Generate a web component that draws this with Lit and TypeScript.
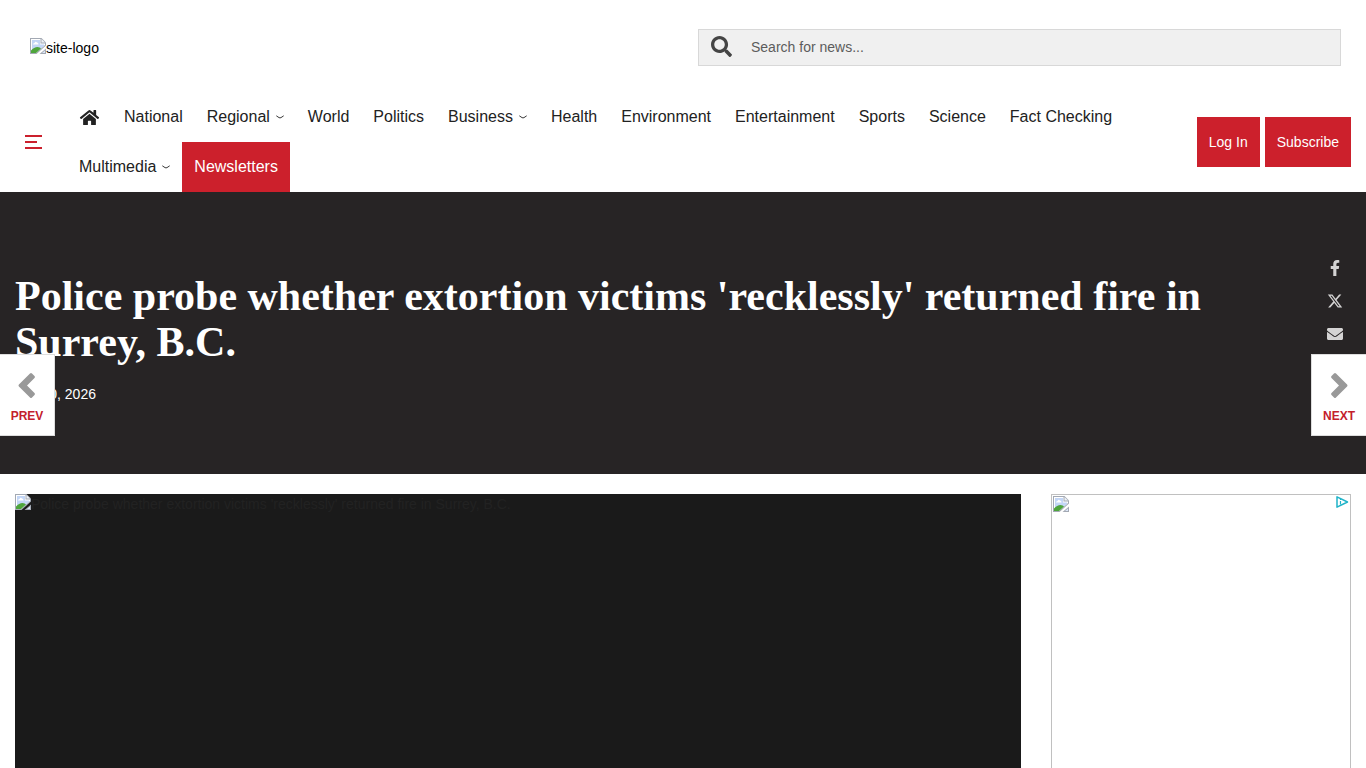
import { LitElement, html, css, svg, nothing } from "lit";
import { customElement, property } from "lit/decorators.js";

interface NavEntry {
  label: string;
  menu?: boolean;
  accent?: boolean;
}

const NAV: NavEntry[] = [
  { label: "National" },
  { label: "Regional", menu: true },
  { label: "World" },
  { label: "Politics" },
  { label: "Business", menu: true },
  { label: "Health" },
  { label: "Environment" },
  { label: "Entertainment" },
  { label: "Sports" },
  { label: "Science" },
  { label: "Fact Checking" },
  { label: "Multimedia", menu: true },
  { label: "Newsletters", accent: true },
];

const HEADLINE =
  "Police probe whether extortion victims 'recklessly' returned fire in Surrey, B.C.";

const ICONS: Record<string, { box: string; path: string }> = {
  home: {
    box: "0 0 576 512",
    path: "M280.37 148.26L96 300.11V464a16 16 0 0 0 16 16l112.06-.29a16 16 0 0 0 15.92-16V368a16 16 0 0 1 16-16h64a16 16 0 0 1 16 16v95.64a16 16 0 0 0 16 16.05L464 480a16 16 0 0 0 16-16V300L295.67 148.26a12.19 12.19 0 0 0-15.3 0zM571.6 251.47L488 182.56V44.05a12 12 0 0 0-12-12h-56a12 12 0 0 0-12 12v72.61L318.47 43a48 48 0 0 0-61 0L4.34 251.47a12 12 0 0 0-1.6 16.9l25.5 31A12 12 0 0 0 45.15 301l235.22-193.74a12.19 12.19 0 0 1 15.3 0L530.9 301a12 12 0 0 0 16.9-1.6l25.5-31a12 12 0 0 0-1.7-16.93z",
  },
  search: {
    box: "0 0 512 512",
    path: "M505 442.7L405.3 343c-4.5-4.500-10.600-7-17-7H372c27.600-35.300 44-79.700 44-128C416 93.100 322.900 0 208 0S0 93.100 0 208s93.100 208 208 208c48.300 0 92.700-16.400 128-44v16.300c0 6.400 2.500 12.500 7 17l99.700 99.700c9.400 9.400 24.600 9.400 33.900 0l28.300-28.300c9.400-9.400 9.400-24.600.1-34zM208 336c-70.700 0-128-57.200-128-128 0-70.700 57.200-128 128-128 70.700 0 128 57.200 128 128 0 70.700-57.200 128-128 128z",
  },
  facebook: {
    box: "0 0 320 512",
    path: "M279.140 288l14.220-92.660h-88.910v-60.130c0-25.350 12.420-50.060 52.240-50.060h40.420V6.260S260.430 0 225.360 0c-73.220 0-121.080 44.380-121.080 124.720v70.620H22.890V288h81.390v224h100.170V288z",
  },
  x: {
    box: "0 0 512 512",
    path: "M389.2 48h70.600L305.600 224.200 487 464H345L233.700 318.600 106.500 464H35.800L200.700 275.500 26.800 48H172.400L272.900 180.900 389.200 48zM364.400 421.800h39.100L151.100 88h-42L364.400 421.800z",
  },
  mail: {
    box: "0 0 512 512",
    path: "M502.3 190.800c3.900-3.100 9.700-.2 9.700 4.700V400c0 26.500-21.500 48-48 48H48c-26.500 0-48-21.500-48-48V195.600c0-5 5.700-7.800 9.700-4.700 22.400 17.400 52.100 39.500 154.100 113.600 21.100 15.400 56.700 47.800 92.200 47.600 35.700.3 72-32.800 92.300-47.600 102-74.100 131.600-96.300 154-113.700zM256 320c23.200.4 56.600-29.200 73.400-41.400 132.700-96.300 142.800-104.700 173.400-128.700 5.800-4.500 9.200-11.500 9.200-18.900v-19c0-26.500-21.500-48-48-48H48c-26.500 0-48 21.500-48 48v19c0 7.400 3.400 14.300 9.200 18.900 30.600 23.900 40.700 32.400 173.400 128.700 16.800 12.200 50.200 41.800 73.400 41.400z",
  },
  left: {
    box: "0 0 20 31",
    path: "M1.900 14.600L13 3.500Q14 2.500 15 3.500L17.500 6Q18.500 7 17.500 8L10 15.500L17.500 23Q18.500 24 17.500 25L15 27.500Q14 28.500 13 27.500L1.900 16.400Q1 15.500 1.900 14.600Z",
  },
  right: {
    box: "0 0 20 31",
    path: "M18.100 14.600L7 3.500Q6 2.500 5 3.500L2.500 6Q1.500 7 2.500 8L10 15.500L2.500 23Q1.500 24 2.500 25L5 27.500Q6 28.500 7 27.500L18.100 16.400Q19 15.500 18.100 14.600Z",
  },
};

const icon = (name: string) => svg`
  <svg class="icon icon-${name}" viewBox=${ICONS[name].box} aria-hidden="true">
    <path fill="currentColor" d=${ICONS[name].path}></path>
  </svg>`;

/** Placeholder shown where a picture is missing, followed by its description. */
@customElement("missing-picture")
export class MissingPicture extends LitElement {
  @property() label = "";

  static styles = css`
    :host {
      display: flex;
      align-items: flex-start;
    }
    .glyph {
      display: block;
      flex: none;
      width: 16px;
      height: 16px;
    }
    .label {
      line-height: 20px;
    }
  `;

  render() {
    return html`
      <svg class="glyph" viewBox="0 0 16 16" aria-hidden="true">
        <path d="M0 0H11.500L16 4.500V7.500L6.500 16H0Z" fill="#a3a9b3"></path>
        <path d="M1 1H10.500V5.500H15V7L6 15H1Z" fill="#fff"></path>
        <path d="M2 2H10V6.500H14V8L6.500 14H2Z" fill="#c3d6f6"></path>
        <path d="M3 6.500q0-1.500 1.500-1.500q1-2 2.500-.5q1.500 0 1.500 2Z" fill="#fff"></path>
        <path d="M1 15V12.500Q4 9 7.500 9Q10 9 11 10.500L6 15Z" fill="#4ea53c"></path>
        <path d="M11.500 1V4.500H15Z" fill="#eef1f6"></path>
        <path d="M16 10.500V16H9.500Z" fill="#a3a9b3"></path>
        <path d="M15 12.500V15H12Z" fill="#dbe6f8"></path>
      </svg>
      ${this.label ? html`<span class="label">${this.label}</span>` : nothing}
    `;
  }
}

@customElement("app-root")
export class AppRoot extends LitElement {
  static styles = css`
    :host {
      display: block;
      background: #fff;
      color: #000;
      font: 14px/20px "Liberation Sans", Arial, sans-serif;
    }
    * {
      box-sizing: border-box;
    }
    a {
      color: inherit;
      text-decoration: none;
    }
    button {
      border: 0;
      margin: 0;
      padding: 0;
      background: none;
      font: inherit;
      color: inherit;
      cursor: pointer;
    }
    .icon {
      display: block;
    }
    .masthead {
      display: grid;
      grid-template-columns: 1fr 1fr;
      align-items: center;
      padding: 29px 0 26px;
    }
    .logo {
      justify-self: start;
      margin-left: 30px;
    }
    .search {
      display: flex;
      align-items: center;
      height: 37px;
      margin: 0 25px 0 15px;
      border: 1px solid #d8d8d8;
      background: #f0f0f0;
      color: #444;
    }
    .search-button {
      padding: 0 19px 2px 12px;
    }
    .icon-search {
      width: 21px;
      height: 21px;
    }
    .search-field {
      flex: 1;
      min-width: 0;
      height: 35px;
      padding: 0 0 2px;
      border: 0;
      outline: 0;
      background: none;
      font: inherit;
      color: #444;
    }
    .search-field::placeholder {
      color: #5c5c5c;
      opacity: 1;
    }
    .navbar {
      display: flex;
      align-items: center;
      padding-right: 15px;
    }
    .burger {
      display: flex;
      flex-direction: column;
      gap: 4px;
      flex: none;
      width: 67px;
      padding-left: 25px;
    }
    .burger-line {
      width: 17px;
      height: 2px;
      background: #cb202d;
    }
    .burger-line.short {
      width: 12px;
    }
    .links {
      display: flex;
      flex-wrap: wrap;
      flex: 1;
      margin: 0;
      padding: 0;
      list-style: none;
      font-size: 16px;
      line-height: 50px;
      color: #222;
    }
    .link {
      display: flex;
      align-items: center;
      height: 50px;
      padding: 0 12px;
    }
    .link.accent {
      background: #cc202c;
      color: #fff;
    }
    .icon-home {
      width: 21px;
      height: 17px;
    }
    .caret {
      width: 8px;
      height: 4px;
      margin-left: 6px;
    }
    .account {
      display: flex;
      flex: none;
      gap: 5px;
      margin-left: 60px;
    }
    .account-link {
      padding: 0 12px;
      background: #cc202c;
      color: #fff;
      line-height: 50px;
    }
    .hero {
      display: flex;
      justify-content: space-between;
      padding: 68px 15px 70px;
      background: #272425;
      color: #fff;
    }
    .title {
      margin: 13px 0 19px;
      font: bold 42px/46px "Liberation Serif", "Times New Roman", serif;
    }
    .date {
      display: block;
    }
    .share {
      display: flex;
      flex: none;
      flex-direction: column;
      gap: 17px;
      margin-right: 8px;
      margin-left: 60px;
      color: #d4d3d3;
    }
    .share .icon {
      width: 16px;
      height: 16px;
    }
    .content {
      display: flex;
      gap: 30px;
      height: calc(100vh - 474px);
      min-height: 294px;
      padding: 20px 15px 0;
      overflow: hidden;
    }
    .lead {
      flex: 1;
      min-width: 0;
      background: #1a1a1a;
      color: #222;
    }
    .ad {
      position: relative;
      flex: none;
      width: 300px;
      height: 600px;
      padding: 1px;
      border: 1px solid #c0c0c0;
    }
    .ad-choices {
      position: absolute;
      top: 0;
      right: 1px;
    }
    .ad-mark {
      display: block;
      width: 14px;
      height: 14px;
    }
    .pager {
      position: fixed;
      top: 354px;
      display: flex;
      flex-direction: column;
      align-items: center;
      gap: 5px;
      width: 55px;
      height: 82px;
      padding-top: 15px;
      border: 1px solid #ddd;
      background: #fff;
      color: #c3202c;
      font-size: 12px;
      font-weight: bold;
    }
    .pager.prev {
      left: 0;
      border-left: 0;
    }
    .pager.next {
      right: 0;
      border-right: 0;
    }
    .pager .icon {
      width: 20px;
      height: 31px;
      color: #999;
    }
  `;

  private renderNav(entry: NavEntry) {
    return html`<li>
      <a class="link ${entry.accent ? "accent" : ""}" href="#">
        ${entry.label}
        ${entry.menu
          ? html`<svg class="caret" viewBox="0 0 8 4" aria-hidden="true">
              <path d="M.3 .8L3 2.600Q4 3.200 5 2.600L7.700 .8" fill="none" stroke="#222" stroke-width=".9"></path>
            </svg>`
          : nothing}
      </a>
    </li>`;
  }

  render() {
    return html`
      <header>
        <div class="masthead">
          <a class="logo" href="#"><missing-picture label="site-logo"></missing-picture></a>
          <form class="search" role="search">
            <button class="search-button" type="button" aria-label="Search">${icon("search")}</button>
            <input class="search-field" type="text" aria-label="Search for news" placeholder="Search for news..." />
          </form>
        </div>
        <nav class="navbar">
          <button class="burger" aria-label="Menu">
            <span class="burger-line"></span>
            <span class="burger-line short"></span>
            <span class="burger-line"></span>
          </button>
          <ul class="links">
            <li><a class="link" href="#" aria-label="Home">${icon("home")}</a></li>
            ${NAV.map((entry) => this.renderNav(entry))}
          </ul>
          <div class="account">
            <a class="account-link" href="#">Log In</a>
            <a class="account-link" href="#">Subscribe</a>
          </div>
        </nav>
      </header>
      <section class="hero">
        <div>
          <h1 class="title">${HEADLINE}</h1>
          <time class="date">Jan 20, 2026</time>
        </div>
        <div class="share">
          <a href="#" aria-label="Share on Facebook">${icon("facebook")}</a>
          <a href="#" aria-label="Share on X">${icon("x")}</a>
          <a href="#" aria-label="Share by email">${icon("mail")}</a>
        </div>
      </section>
      <main class="content">
        <missing-picture class="lead" label=${HEADLINE}></missing-picture>
        <aside class="ad">
          <missing-picture></missing-picture>
          <a class="ad-choices" href="#" aria-label="Ad choices">
            <svg class="ad-mark" viewBox="0 0 14 14" aria-hidden="true">
              <path d="M2 1.800V12.200L12.500 7Z" fill="none" stroke="#1fb3c8" stroke-width="1.500" stroke-linejoin="round"></path>
              <path d="M5.500 4V5M5.500 6V9.500" stroke="#1fb3c8" stroke-width="1.200"></path>
            </svg>
          </a>
        </aside>
      </main>
      <a class="pager prev" href="#">${icon("left")}<span>PREV</span></a>
      <a class="pager next" href="#">${icon("right")}<span>NEXT</span></a>
    `;
  }
}
